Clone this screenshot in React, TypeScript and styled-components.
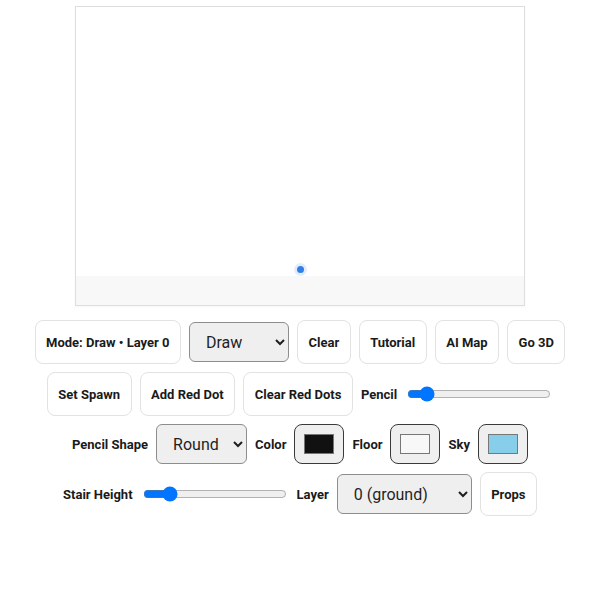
import React, { useState } from 'react';
import styled, { createGlobalStyle } from 'styled-components';

const GlobalStyle = createGlobalStyle`
  body {
    margin: 0;
    background: #ffffff;
    font-family: Roboto, "Liberation Sans", Arial, sans-serif;
    color: #1f1f1f;
  }
`;

const Page = styled.main`
  display: flex;
  flex-direction: column;
  align-items: center;
  padding-top: 6px;
`;

const Canvas = styled.div`
  position: relative;
  display: flex;
  flex-direction: column;
  width: 450px;
  height: 300px;
  box-sizing: border-box;
  border: 1px solid #dedede;
  background: #ffffff;
  box-shadow: 0 1px 2px rgba(0, 0, 0, 0.04);
`;

const Sky = styled.div`
  flex: 1;
`;

const Floor = styled.div`
  height: 29px;
  background: #f8f8f8;
`;

const Spawn = styled.div`
  position: absolute;
  left: 221px;
  top: 259px;
  width: 7px;
  height: 7px;
  border-radius: 50%;
  background: #2f7fe6;
  box-shadow: 0 0 0 3px rgba(47, 127, 230, 0.14);
`;

const Toolbar = styled.section`
  display: flex;
  flex-direction: column;
  align-items: center;
  gap: 8px;
  margin-top: 14px;
`;

const Row = styled.div`
  display: flex;
  justify-content: center;
  align-items: center;
  gap: 8px;
`;

const Group = styled.div`
  display: flex;
  align-items: center;
  gap: 8px;
`;

const Button = styled.button`
  height: 44px;
  padding: 0 10.5px;
  border: 1px solid #e2e2e2;
  border-radius: 8px;
  background: #ffffff;
  color: #1a1a1a;
  font-family: Roboto, "Liberation Sans", Arial, sans-serif;
  font-size: 13px;
  font-weight: 700;
  cursor: pointer;
`;

const Label = styled.label`
  font-size: 13px;
  font-weight: 700;
  color: #1a1a1a;
  white-space: nowrap;
`;

const Select = styled.select<{ $width: number }>`
  width: ${(p) => p.$width}px;
  height: 40px;
  padding: 0 6px 0 12px;
  border: 1px solid #8d8d8d;
  border-radius: 6px;
  background: #efefef;
  color: #1f1f1f;
  font-family: Roboto, "Liberation Sans", Arial, sans-serif;
  font-size: 16px;
`;

const Slider = styled.input`
  width: 144px;
  margin: 2px;
  accent-color: #0075ff;
`;

const ColorInput = styled.input`
  width: 50px;
  height: 40px;
  box-sizing: border-box;
  padding: 9px;
  border: 1px solid #3a3a3a;
  border-radius: 8px;
  background: #efefef;
  cursor: pointer;

  &::-webkit-color-swatch-wrapper {
    padding: 0;
  }

  &::-webkit-color-swatch {
    border: 1px solid #777777;
    border-radius: 0;
  }
`;

export default function App(): JSX.Element {
  const [mode, setMode] = useState('draw');
  const [pencil, setPencil] = useState(9);
  const [shape, setShape] = useState('round');
  const [color, setColor] = useState('#111111');
  const [floor, setFloor] = useState('#f8f8f8');
  const [sky, setSky] = useState('#87ceeb');
  const [stair, setStair] = useState(15);
  const [layer, setLayer] = useState('0');

  return (
    <>
      <GlobalStyle />
      <Page>
        <Canvas>
          <Sky />
          <Floor />
          <Spawn />
        </Canvas>

        <Toolbar>
          <Row>
            <Button>Mode: Draw • Layer 0</Button>
            <Select $width={100} value={mode} onChange={(e) => setMode(e.target.value)}>
              <option value="draw">Draw</option>
              <option value="erase">Erase</option>
              <option value="fill">Fill</option>
            </Select>
            <Button>Clear</Button>
            <Button>Tutorial</Button>
            <Button>AI Map</Button>
            <Button>Go 3D</Button>
          </Row>

          <Row>
            <Button>Set Spawn</Button>
            <Button>Add Red Dot</Button>
            <Button>Clear Red Dots</Button>
            <Group>
              <Label>Pencil</Label>
              <Slider
                type="range"
                min={0}
                max={100}
                value={pencil}
                onChange={(e) => setPencil(Number(e.target.value))}
              />
            </Group>
          </Row>

          <Row>
            <Group>
              <Label>Pencil Shape</Label>
              <Select $width={91} value={shape} onChange={(e) => setShape(e.target.value)}>
                <option value="round">Round</option>
                <option value="square">Square</option>
              </Select>
            </Group>
            <Group>
              <Label>Color</Label>
              <ColorInput type="color" value={color} onChange={(e) => setColor(e.target.value)} />
            </Group>
            <Group>
              <Label>Floor</Label>
              <ColorInput type="color" value={floor} onChange={(e) => setFloor(e.target.value)} />
            </Group>
            <Group>
              <Label>Sky</Label>
              <ColorInput type="color" value={sky} onChange={(e) => setSky(e.target.value)} />
            </Group>
          </Row>

          <Row>
            <Group>
              <Label>Stair Height</Label>
              <Slider
                type="range"
                min={0}
                max={100}
                value={stair}
                onChange={(e) => setStair(Number(e.target.value))}
              />
            </Group>
            <Group>
              <Label>Layer</Label>
              <Select $width={135} value={layer} onChange={(e) => setLayer(e.target.value)}>
                <option value="0">0 (ground)</option>
                <option value="1">1</option>
                <option value="2">2</option>
              </Select>
            </Group>
            <Button>Props</Button>
          </Row>
        </Toolbar>
      </Page>
    </>
  );
}
